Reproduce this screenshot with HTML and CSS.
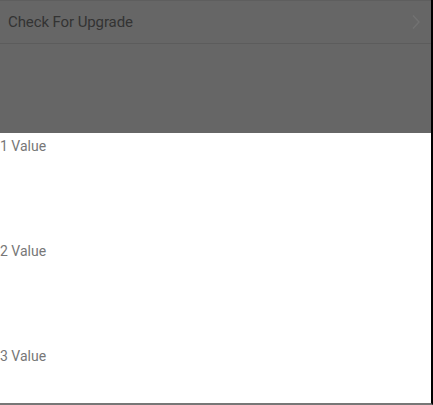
FILE: index.html
```html
<!DOCTYPE html>
<html>
<head>
<meta charset="utf-8">
<link rel="stylesheet" href="styles.css">
</head>
<body>
<div class="frame">
  <div class="dim">
    <div class="row">
      <span class="row-label">Check For Upgrade</span>
      <svg class="chev" width="8" height="16" viewBox="0 0 8 16"><path d="M1 1.5 L7 8 L1 14.5" fill="none" stroke="#727272" stroke-width="1.4"/></svg>
    </div>
  </div>
  <div class="values">
    <div class="value">1 Value</div>
    <div class="value">2 Value</div>
    <div class="value">3 Value</div>
  </div>
</div>
</body>
</html>
```
FILE: styles.css
```css
html, body {
  margin: 0;
  padding: 0;
  background: #fff;
}
.frame {
  width: 431px;
  height: 403px;
  border-right: 2px solid #000;
  border-bottom: 2px solid #777;
  font-family: Roboto, "Liberation Sans", sans-serif;
  overflow: hidden;
}
.dim {
  height: 133px;
  background: #666;
  border-top: 1px solid #5e5e5e;
  box-sizing: border-box;
}
.row {
  height: 43px;
  border-bottom: 1px solid #5c5c5c;
  display: flex;
  align-items: center;
  justify-content: space-between;
  padding: 0 11px 0 8px;
  box-sizing: border-box;
}
.row-label {
  font-size: 15px;
  color: #333;
  letter-spacing: -0.1px;
}
.chev {
  display: block;
}
.values {
  display: flex;
  flex-direction: column;
}
.value {
  height: 105px;
  font-size: 14px;
  color: #777;
  padding-top: 5px;
  box-sizing: border-box;
  line-height: 16px;
}
```
